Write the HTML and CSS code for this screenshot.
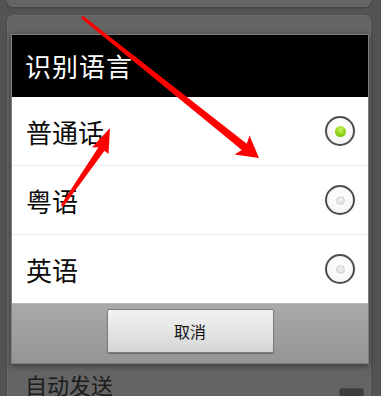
FILE: index.html
```html
<!DOCTYPE html>
<html lang="zh">
<head>
<meta charset="utf-8">
<link rel="stylesheet" href="styles.css">
</head>
<body>
<div class="screen">
  <div class="card card-top"></div>
  <div class="card card-main">
    <div class="setting-row">
      <span class="setting-label">自动发送</span>
      <span class="toggle"></span>
    </div>
  </div>

  <div class="dialog">
    <div class="dialog-title">识别语言</div>
    <ul class="options">
      <li class="option">
        <span class="option-label">普通话</span>
        <span class="radio checked"><span class="dot"></span></span>
      </li>
      <li class="option">
        <span class="option-label">粤语</span>
        <span class="radio"><span class="dot"></span></span>
      </li>
      <li class="option">
        <span class="option-label">英语</span>
        <span class="radio"><span class="dot"></span></span>
      </li>
    </ul>
    <div class="dialog-footer">
      <button class="btn">取消</button>
    </div>
  </div>

  <svg class="arrows" width="381" height="396" viewBox="0 0 381 396">
    <polygon fill="#ff0000" points="81.1,18.2 241.8,150 234.5,154.4 259,158 249.5,135.6 246.8,143.8 82.9,15.8"/>
    <polygon fill="#ff0000" points="60.7,205.2 98.5,147.2 92,147.5 110,128 108.5,154 104.5,150.8 63.3,206.8"/>
  </svg>
</div>
</body>
</html>
```
FILE: styles.css
```css
* { box-sizing: border-box; }
html, body {
  margin: 0;
  padding: 0;
}
body {
  width: 381px;
  height: 396px;
  overflow: hidden;
  background: #535353;
  font-family: "Noto Sans CJK SC", "Noto Sans", sans-serif;
}
.screen {
  position: relative;
  width: 381px;
  height: 396px;
  padding: 0 10px 0 7px;
  display: flex;
  flex-direction: column;
}
.card {
  background: #646464;
  border: 1px solid #6a6a6a;
  box-shadow: 0 1px 2px rgba(0,0,0,0.25);
}
.card-top {
  height: 7px;
  flex: none;
  border-top: none;
  border-radius: 0 0 6px 6px;
}
.card-main {
  margin-top: 8px;
  flex: 1;
  border-bottom: none;
  border-radius: 6px 6px 0 0;
  padding: 354px 6px 0 17px;
}
.setting-row {
  display: flex;
  justify-content: space-between;
  align-items: flex-start;
}
.setting-label {
  font-size: 22px;
  line-height: 28px;
  color: #1c1c1c;
}
.toggle {
  margin-top: 18px;
  width: 25px;
  height: 20px;
  border-radius: 3px;
  background: #3c3c3c;
  border: 1px solid #4a4a4a;
}

/* dialog overlay */
.dialog {
  position: absolute;
  left: 11px;
  top: 34px;
  width: 358px;
  border: 1px solid #7e7e7e;
  box-shadow: 0 2px 6px rgba(0,0,0,0.45);
  background: #fff;
}
.dialog-title {
  height: 62px;
  background: #000;
  color: #fff;
  font-size: 26px;
  line-height: 62px;
  padding-left: 13px;
  letter-spacing: 1px;
}
.options {
  list-style: none;
  margin: 0;
  padding: 0;
  background: #fff;
}
.option {
  height: 68px;
  display: flex;
  align-items: center;
  justify-content: space-between;
  padding: 0 13px 0 14px;
}
.option + .option {
  height: 69px;
  border-top: 1px solid #ececec;
}
.option-label {
  font-size: 26px;
  color: #0a0a0a;
}
.radio {
  width: 30px;
  height: 30px;
  border-radius: 50%;
  border: 2px solid #4d4d4d;
  background: radial-gradient(circle at 50% 40%, #ffffff 0%, #f6f6f6 70%, #e8e8e8 100%);
  display: flex;
  align-items: center;
  justify-content: center;
}
.dot {
  width: 9px;
  height: 9px;
  border-radius: 50%;
  background: radial-gradient(circle at 50% 35%, #f0f0f0 0%, #dcdcdc 100%);
  border: 1px solid #d0d0d0;
}
.radio.checked .dot {
  width: 11px;
  height: 11px;
  border: none;
  background: radial-gradient(circle at 50% 30%, #c4f060 0%, #8fd41a 55%, #6cb400 100%);
}
.dialog-footer {
  height: 60px;
  background: linear-gradient(#a9a9a9, #959595);
  border-top: 1px solid #b8b8b8;
  display: flex;
  justify-content: center;
  padding-top: 5px;
}
.btn {
  width: 167px;
  height: 44px;
  font-family: "Noto Sans CJK SC", "Noto Sans", sans-serif;
  font-size: 16px;
  color: #111;
  background: linear-gradient(#f2f2f2, #d6d6d6);
  border: 1px solid #7c7c7c;
  border-radius: 2px;
  box-shadow: 0 1px 1px rgba(0,0,0,0.3);
  padding: 0;
}

.arrows {
  position: absolute;
  left: 0;
  top: 0;
  pointer-events: none;
}
```
